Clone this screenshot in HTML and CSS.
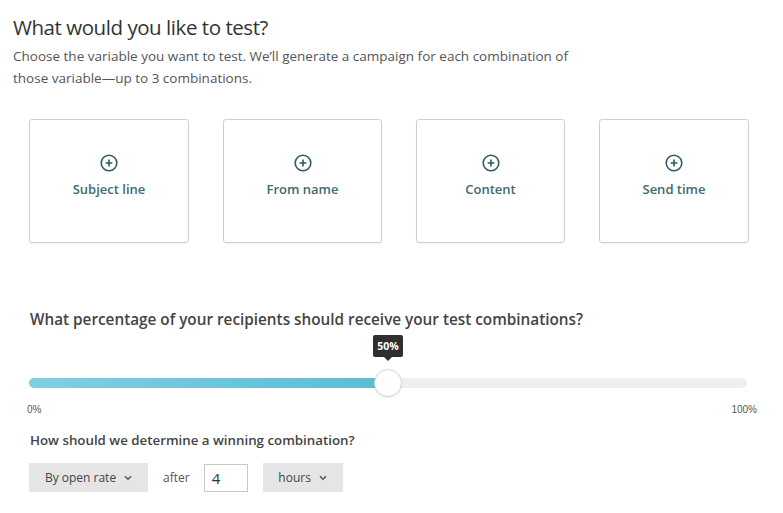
FILE: index.html
```html
<!DOCTYPE html>
<html>
<head>
<meta charset="utf-8">
<link rel="stylesheet" href="styles.css">
</head>
<body>
<div class="page">
  <h1 class="title">What would you like to test?</h1>
  <p class="intro">Choose the variable you want to test. We’ll generate a campaign for each combination of<br>those variable—up to 3 combinations.</p>

  <div class="cards">
    <div class="card c1">
      <svg class="plus" width="18" height="18" viewBox="0 0 18 18"><circle cx="9" cy="9" r="7.8" fill="none" stroke="#2f5a5e" stroke-width="1.6"/><path d="M9 5.6v6.8M5.6 9h6.8" stroke="#2f5a5e" stroke-width="1.6"/></svg>
      <span class="label">Subject line</span>
    </div>
    <div class="card c2">
      <svg class="plus" width="18" height="18" viewBox="0 0 18 18"><circle cx="9" cy="9" r="7.8" fill="none" stroke="#2f5a5e" stroke-width="1.6"/><path d="M9 5.6v6.8M5.6 9h6.8" stroke="#2f5a5e" stroke-width="1.6"/></svg>
      <span class="label">From name</span>
    </div>
    <div class="card c3">
      <svg class="plus" width="18" height="18" viewBox="0 0 18 18"><circle cx="9" cy="9" r="7.8" fill="none" stroke="#2f5a5e" stroke-width="1.6"/><path d="M9 5.6v6.8M5.6 9h6.8" stroke="#2f5a5e" stroke-width="1.6"/></svg>
      <span class="label">Content</span>
    </div>
    <div class="card c4">
      <svg class="plus" width="18" height="18" viewBox="0 0 18 18"><circle cx="9" cy="9" r="7.8" fill="none" stroke="#2f5a5e" stroke-width="1.6"/><path d="M9 5.6v6.8M5.6 9h6.8" stroke="#2f5a5e" stroke-width="1.6"/></svg>
      <span class="label">Send time</span>
    </div>
  </div>

  <h2 class="question">What percentage of your recipients should receive your test combinations?</h2>

  <div class="slider">
    <div class="track">
      <div class="fill" style="width: 50%"></div>
      <div class="thumb" style="left: 50%">
        <div class="tip">50%</div>
      </div>
    </div>
    <div class="scale"><span>0%</span><span>100%</span></div>
  </div>

  <h3 class="question2">How should we determine a winning combination?</h3>

  <div class="controls">
    <div class="select s1">By open rate <svg class="chev" width="8" height="6" viewBox="0 0 8 6"><path d="M1 1.2l3 3 3-3" fill="none" stroke="#555" stroke-width="1.5"/></svg></div>
    <span class="after">after</span>
    <div class="input">4</div>
    <div class="select s2">hours <svg class="chev" width="8" height="6" viewBox="0 0 8 6"><path d="M1 1.2l3 3 3-3" fill="none" stroke="#555" stroke-width="1.5"/></svg></div>
  </div>
</div>
</body>
</html>
```

FILE: styles.css
```css
* { box-sizing: border-box; }
html, body { margin: 0; padding: 0; background: #fff; }
body { font-family: "Open Sans", "Liberation Sans", sans-serif; color: #444; }

.page { padding: 14px 0 0 13px; width: 783px; height: 513px; overflow: hidden; }

.title {
  margin: 0;
  font-size: 20.5px;
  font-weight: 500;
  color: #333;
  line-height: 26px;
  letter-spacing: -0.45px;
}

.intro {
  margin: 5px 0 0 0;
  font-size: 13.5px;
  line-height: 22px;
  color: #555;
}

.cards {
  display: grid;
  grid-template-columns: 160px 159px 149px 150px;
  column-gap: 34px;
  margin: 30px 0 0 16px;
}

.card {
  height: 124px;
  border: 1px solid #cfcfcf;
  border-radius: 3px;
  display: flex;
  flex-direction: column;
  align-items: center;
  padding-top: 34px;
  box-shadow: 0 1px 1px rgba(0,0,0,0.04);
}

.plus { display: block; }

.label {
  margin-top: 8px;
  font-size: 13px;
  font-weight: 600;
  color: #3d6b70;
  line-height: 18px;
}

.question {
  margin: 65px 0 0 17px;
  font-size: 15.3px;
  font-weight: 600;
  color: #444;
  line-height: 22px;
}

.slider { margin: 48px 0 0 16px; width: 718px; }

.track {
  position: relative;
  height: 10px;
  background: #efefef;
  border-radius: 5px;
}

.fill {
  height: 10px;
  background: linear-gradient(to right, #7fd0e3, #5bbcd4);
  border-radius: 5px 0 0 5px;
}

.thumb {
  position: absolute;
  top: 50%;
  width: 28px;
  height: 28px;
  margin: -14px 0 0 -14px;
  background: #fff;
  border: 1px solid #d6d6d6;
  border-radius: 50%;
  box-shadow: 0 1px 2px rgba(0,0,0,0.08);
}

.tip {
  position: absolute;
  bottom: 39px;
  left: 50%;
  transform: translateX(-50%);
  background: #2f2f2f;
  color: #fff;
  font-size: 10.5px;
  font-weight: 700;
  width: 30px;
  height: 22px;
  line-height: 22px;
  text-align: center;
  border-radius: 2px;
}
.tip::after {
  content: "";
  position: absolute;
  left: 50%;
  top: 100%;
  margin-left: -4px;
  border: 4px solid transparent;
  border-top-color: #2f2f2f;
}

.scale {
  display: flex;
  justify-content: space-between;
  margin: 16px -10px 0 -2px;
  font-family: "Liberation Sans", Arial, sans-serif;
  font-size: 10px;
  color: #555;
  line-height: 12px;
}

.question2 {
  margin: 15px 0 0 17px;
  font-size: 13.3px;
  font-weight: 600;
  color: #444;
  line-height: 18px;
}

.controls {
  display: flex;
  align-items: center;
  margin: 14px 0 0 16px;
}

.select {
  height: 29px;
  background: #e5e5e5;
  display: flex;
  align-items: center;
  justify-content: center;
  gap: 8px;
  font-size: 12px;
  color: #444;
}
.s1 { width: 119px; }
.s2 { width: 80px; }

.after { font-size: 12px; color: #555; margin: 0 14px 0 15px; }

.input {
  width: 44px;
  height: 28px;
  border: 1px solid #c8c8c8;
  font-size: 15px;
  line-height: 26px;
  padding-left: 7px;
  color: #333;
  margin-right: 15px;
}

.chev { display: block; }
```
